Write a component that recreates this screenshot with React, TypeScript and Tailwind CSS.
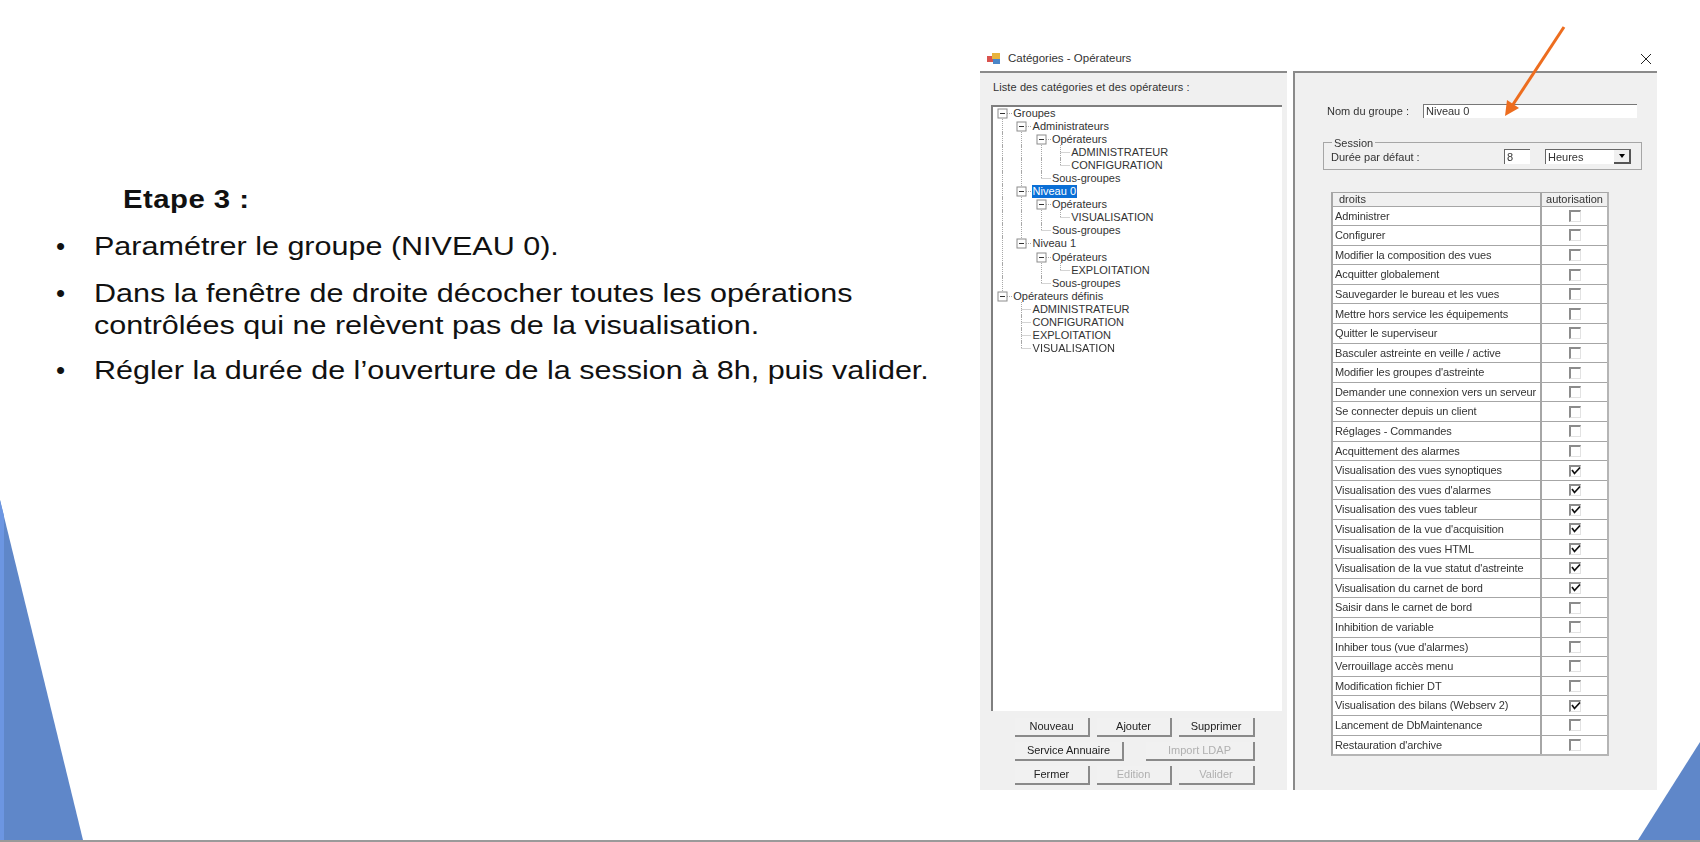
type TreeRow = {
  label: string;
  level: number;
  kind: "box" | "tee" | "end";
  guides: number[];
  selected?: boolean;
};

const treeRows: TreeRow[] = [
  { label: "Groupes", level: 0, kind: "box", guides: [] },
  { label: "Administrateurs", level: 1, kind: "box", guides: [0] },
  { label: "Opérateurs", level: 2, kind: "box", guides: [0, 1] },
  { label: "ADMINISTRATEUR", level: 3, kind: "tee", guides: [0, 1, 2] },
  { label: "CONFIGURATION", level: 3, kind: "end", guides: [0, 1, 2] },
  { label: "Sous-groupes", level: 2, kind: "end", guides: [0, 1] },
  { label: "Niveau 0", level: 1, kind: "box", guides: [0], selected: true },
  { label: "Opérateurs", level: 2, kind: "box", guides: [0, 1] },
  { label: "VISUALISATION", level: 3, kind: "end", guides: [0, 1, 2] },
  { label: "Sous-groupes", level: 2, kind: "end", guides: [0, 1] },
  { label: "Niveau 1", level: 1, kind: "box", guides: [0] },
  { label: "Opérateurs", level: 2, kind: "box", guides: [0] },
  { label: "EXPLOITATION", level: 3, kind: "end", guides: [0, 2] },
  { label: "Sous-groupes", level: 2, kind: "end", guides: [0] },
  { label: "Opérateurs définis", level: 0, kind: "box", guides: [] },
  { label: "ADMINISTRATEUR", level: 1, kind: "tee", guides: [] },
  { label: "CONFIGURATION", level: 1, kind: "tee", guides: [] },
  { label: "EXPLOITATION", level: 1, kind: "tee", guides: [] },
  { label: "VISUALISATION", level: 1, kind: "end", guides: [] },
];

const rights: [string, boolean][] = [
  ["Administrer", false],
  ["Configurer", false],
  ["Modifier la composition des vues", false],
  ["Acquitter globalement", false],
  ["Sauvegarder le bureau et les vues", false],
  ["Mettre hors service les équipements", false],
  ["Quitter le superviseur", false],
  ["Basculer astreinte en veille / active", false],
  ["Modifier les groupes d'astreinte", false],
  ["Demander une connexion vers un serveur", false],
  ["Se connecter depuis un client", false],
  ["Réglages - Commandes", false],
  ["Acquittement des alarmes", false],
  ["Visualisation des vues synoptiques", true],
  ["Visualisation des vues d'alarmes", true],
  ["Visualisation des vues tableur", true],
  ["Visualisation de la vue d'acquisition", true],
  ["Visualisation des vues HTML", true],
  ["Visualisation de la vue statut d'astreinte", true],
  ["Visualisation du carnet de bord", true],
  ["Saisir dans le carnet de bord", false],
  ["Inhibition de variable", false],
  ["Inhiber tous (vue d'alarmes)", false],
  ["Verrouillage accès menu", false],
  ["Modification fichier DT", false],
  ["Visualisation des bilans (Webserv 2)", true],
  ["Lancement de DbMaintenance", false],
  ["Restauration d'archive", false],
];

// colonne de connecteurs de l'arbre
function Connector({ guide, row }: { guide: boolean; row?: TreeRow }) {
  const stroke = "#a8a8a8";
  return (
    <svg width="19.3" height="13" className="shrink-0 overflow-visible">
      {guide && <line x1="9.5" y1="-1" x2="9.5" y2="14" stroke={stroke} strokeDasharray="1 1" />}
      {row?.kind === "tee" && <line x1="9.5" y1="-1" x2="9.5" y2="14" stroke={stroke} strokeDasharray="1 1" />}
      {row?.kind === "end" && <line x1="9.5" y1="-1" x2="9.5" y2="6.5" stroke={stroke} strokeDasharray="1 1" />}
      {row && row.kind !== "box" && <line x1="9.5" y1="6.5" x2="19" y2="6.5" stroke={stroke} strokeDasharray="1 1" />}
      {row?.kind === "box" && (
        <>
          <line x1="14" y1="6.5" x2="19" y2="6.5" stroke={stroke} strokeDasharray="1 1" />
          <rect x="5" y="2" width="9" height="9" fill="#fff" stroke="#8c8c8c" />
          <line x1="7" y1="6.5" x2="12" y2="6.5" stroke="#333" />
        </>
      )}
    </svg>
  );
}

function Tree() {
  return (
    <div className="flex-1 border-l-2 border-t-2 border-[#7f7f7f] bg-white">
      {treeRows.map((row, i) => (
        <div key={i} className="flex h-[13.06px] items-center">
          {Array.from({ length: row.level }).map((_, col) => (
            <Connector key={col} guide={row.guides.includes(col)} />
          ))}
          <Connector guide={false} row={row} />
          <span
            className={
              row.selected
                ? "bg-[#0a6fd6] px-px leading-[13px] text-white"
                : "ml-px leading-[13px] text-[#333]"
            }
          >
            {row.label}
          </span>
        </div>
      ))}
    </div>
  );
}

function WinButton({ label, width, disabled }: { label: string; width: string; disabled?: boolean }) {
  return (
    <div
      className={`flex h-[19px] items-center justify-center border-b-2 border-r-2 border-b-[#8a8a8a] border-r-[#8a8a8a] bg-[#f1f1f1] ${width} ${
        disabled ? "text-[#b0b0b0]" : "text-[#222]"
      }`}
    >
      {label}
    </div>
  );
}

function CheckBox({ checked }: { checked: boolean }) {
  return (
    <div className="relative h-[12px] w-[12px] border-b border-l-2 border-r border-t-2 border-b-[#e2e2e2] border-l-[#8c8c8c] border-r-[#e2e2e2] border-t-[#8c8c8c] bg-white">
      {checked && (
        <svg width="10" height="9" className="absolute left-0 top-0">
          <path d="M1 3 L3.5 6.5 L9 0.5" fill="none" stroke="#111" strokeWidth="1.7" />
        </svg>
      )}
    </div>
  );
}

function RightsTable() {
  return (
    <div className="ml-[36px] mt-[22px] w-[278px] border-b-2 border-l-2 border-r-2 border-t border-b-[#b5b5b5] border-l-[#a6a6a6] border-r-[#b5b5b5] border-t-[#a6a6a6]">
      <div className="flex h-[13px] items-center bg-[#f0f0f0] text-[#333]">
        <div className="w-[209px] border-r-2 border-[#a6a6a6] pl-[6px] leading-[13px]">droits</div>
        <div className="flex-1 text-center leading-[13px]">autorisation</div>
      </div>
      {rights.map(([label, checked]) => (
        <div key={label} className="flex h-[19.6px] items-center border-t border-[#a6a6a6] bg-white text-[#333]">
          <div className="flex h-full w-[209px] items-center overflow-hidden whitespace-nowrap border-r-2 border-[#a6a6a6] pl-[2px] tracking-[-0.1px]">
            {label}
          </div>
          <div className="flex flex-1 justify-center">
            <CheckBox checked={checked} />
          </div>
        </div>
      ))}
    </div>
  );
}

function Dialog() {
  return (
    <div className="ml-[980px] mt-[47px] w-[677px] text-[11px] text-[#333] blur-[0.35px] [font-family:'Liberation_Sans',Arial,sans-serif]">
      {/* barre de titre */}
      <div className="flex h-[24px] items-center bg-white pl-[7px] pr-[5px]">
        <svg width="14" height="12" className="shrink-0">
          <rect x="0" y="3" width="6" height="6" fill="#d9534f" />
          <rect x="5" y="0" width="8" height="6" fill="#e8b33c" />
          <rect x="6" y="6" width="7" height="5" fill="#4a86c8" />
        </svg>
        <span className="ml-[7px] text-[11.5px]">Catégories - Opérateurs</span>
        <svg width="12" height="12" className="ml-auto">
          <path d="M1 1 L11 11 M11 1 L1 11" stroke="#222" strokeWidth="1" />
        </svg>
      </div>

      <div className="flex h-[719px] gap-[6px]">
        {/* panneau gauche */}
        <div className="flex w-[307px] flex-col border-t-2 border-[#8a8a8a] bg-[#f0f0f0] pb-[5px]">
          <div className="ml-[13px] mt-[6px] h-[26px] tracking-[0.1px]">Liste des catégories et des opérateurs :</div>
          <div className="ml-[11px] mr-[5px] flex flex-1 flex-col">
            <Tree />
          </div>
          <div className="ml-[35px] mt-[7px] flex w-[240px] flex-col gap-[5px]">
            <div className="flex justify-between">
              <WinButton label="Nouveau" width="w-[75px]" />
              <WinButton label="Ajouter" width="w-[75px]" />
              <WinButton label="Supprimer" width="w-[76px]" />
            </div>
            <div className="flex justify-between">
              <WinButton label="Service Annuaire" width="w-[109px]" />
              <WinButton label="Import LDAP" width="w-[109px]" disabled />
            </div>
            <div className="flex justify-between">
              <WinButton label="Fermer" width="w-[75px]" />
              <WinButton label="Edition" width="w-[75px]" disabled />
              <WinButton label="Valider" width="w-[76px]" disabled />
            </div>
          </div>
        </div>

        {/* panneau droit */}
        <div className="flex-1 border-l-2 border-t-2 border-[#8a8a8a] bg-[#f0f0f0]">
          <div className="ml-[32px] mt-[30px] flex items-center">
            <span className="w-[96px]">Nom du groupe :</span>
            <div className="h-[14px] w-[214px] border-l border-t border-[#777] bg-white pl-[2px] leading-[13px]">
              Niveau 0
            </div>
          </div>
          <fieldset className="ml-[28px] mt-[17px] h-[33px] w-[319px] border border-[#a6a6a6] pl-[7px]">
            <legend className="ml-px px-[2px] leading-[12px]">Session</legend>
            <div className="flex items-center">
              <span className="w-[173px]">Durée par défaut :</span>
              <div className="h-[15px] w-[26px] border-l border-t border-[#666] bg-white pl-[2px] leading-[14px]">8</div>
              <div className="ml-[15px] flex h-[15px] w-[86px] items-center border-l border-t border-[#666] bg-white pl-[2px]">
                Heures
                <div className="ml-auto flex h-full w-[17px] items-center justify-center border-b-2 border-r-2 border-[#555] bg-[#f0f0f0]">
                  <div className="h-0 w-0 border-x-[3.5px] border-t-[4px] border-x-transparent border-t-black" />
                </div>
              </div>
            </div>
          </fieldset>
          <RightsTable />
        </div>
      </div>
    </div>
  );
}

export default function App() {
  return (
    <div className="relative h-[842px] w-[1700px] overflow-hidden border-b-2 border-[#9a9a9a] bg-white [font-family:'Liberation_Sans',Arial,sans-serif]">
      {/* triangles décoratifs */}
      <svg width="1700" height="842" className="absolute left-0 top-0">
        <polygon points="0,500 83,840 0,840" fill="#5f87c9" />
        <polygon points="0,500 4,516 4,840 0,840" fill="#6c96e2" />
        <polygon points="1700,742 1700,840 1638,840" fill="#5f87c9" />
      </svg>

      {/* texte étiré horizontalement comme sur la capture */}
      <div className="absolute left-[123px] top-[183px] origin-left scale-x-[1.173] text-[25px] font-bold leading-[32px] tracking-[0.4px] text-[#111]">
        Etape 3 :
      </div>
      <ul className="absolute left-[56px] top-[230px] w-[880px] text-[26px] leading-[32px] text-[#111]">
        <li className="flex">
          <span className="w-[38px]">•</span>
          <span className="origin-left scale-x-[1.174] whitespace-nowrap">Paramétrer le groupe (NIVEAU 0).</span>
        </li>
        <li className="mt-[15px] flex">
          <span className="w-[38px]">•</span>
          <span className="origin-left scale-x-[1.174] whitespace-nowrap">
            Dans la fenêtre de droite décocher toutes les opérations
            <br />
            contrôlées qui ne relèvent pas de la visualisation.
          </span>
        </li>
        <li className="mt-[13px] flex">
          <span className="w-[38px]">•</span>
          <span className="origin-left scale-x-[1.174] whitespace-nowrap">
            Régler la durée de l’ouverture de la session à 8h, puis valider.
          </span>
        </li>
      </ul>

      <div className="relative">
        <Dialog />
      </div>

      {/* flèche orange */}
      <svg width="1700" height="842" className="pointer-events-none absolute left-0 top-0">
        <line x1="1564" y1="27" x2="1512" y2="106" stroke="#ed6d1f" strokeWidth="3" />
        <polygon points="1505,116 1507,100 1519,108" fill="#ed6d1f" />
      </svg>
    </div>
  );
}
